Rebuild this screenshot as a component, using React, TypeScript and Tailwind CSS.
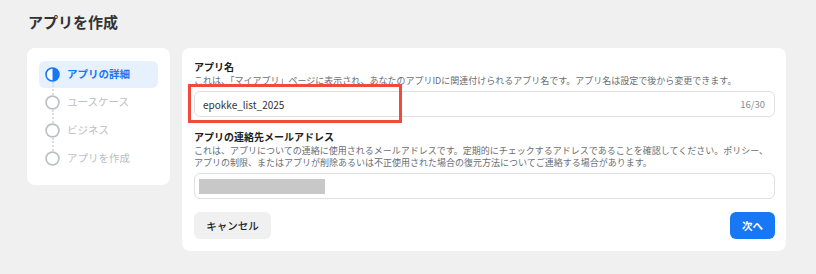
import React from "react";

const font = { fontFamily: '"Noto Sans CJK JP", "Noto Sans", sans-serif' };

function StepIcon({ active }: { active: boolean }) {
  if (active) {
    return (
      <svg width="15" height="15" viewBox="0 0 15 15" className="shrink-0">
        <circle cx="7.5" cy="7.5" r="6.5" fill="white" stroke="#1877f2" strokeWidth="1.6" />
        <path d="M7.5 1 A6.5 6.5 0 0 1 7.5 14 Z" fill="#1877f2" />
      </svg>
    );
  }
  return (
    <svg width="15" height="15" viewBox="0 0 15 15" className="shrink-0">
      <circle cx="7.5" cy="7.5" r="6.4" fill="white" stroke="#bcc0c4" strokeWidth="1.7" />
    </svg>
  );
}

const steps = ["アプリの詳細", "ユースケース", "ビジネス", "アプリを作成"];

export default function App() {
  return (
    <div className="min-h-[274px] w-[816px] bg-[#f0f0f0] pl-[27px] pr-[30px] pt-[12px]" style={font}>
      <h1 className="h-[20px] pl-[1px] text-[15px] font-bold leading-[20px] text-[#333333]">アプリを作成</h1>
      <div className="mt-[16px] flex items-start gap-[12px]">
        {/* Left nav card */}
        <div className="w-[143px] rounded-[8px] bg-white px-[12px] py-[13px]">
          <div className="flex flex-col gap-[1px]">
            {steps.map((s, i) => (
              <div
                key={s}
                className={
                  i === 0
                    ? "relative flex h-[27px] items-center gap-[7px] rounded-[6px] bg-[#e7f0fd] pl-[6px]"
                    : "relative flex h-[27px] items-center gap-[7px] rounded-[6px] pl-[6px]"
                }
              >
                <StepIcon active={i === 0} />
                <span
                  className={
                    i === 0
                      ? "text-[10.5px] font-bold leading-none text-[#1877f2]"
                      : "text-[10.5px] leading-none text-[#bcc0c4]"
                  }
                >
                  {s}
                </span>
                {i < steps.length - 1 && (
                  <div className="absolute left-[13px] top-[21px] h-[13px] border-l-2 border-dotted border-[#dadde1]" />
                )}
              </div>
            ))}
          </div>
        </div>

        {/* Right form card */}
        <div className="flex-1 rounded-[8px] bg-white pb-[12px] pl-[12px] pr-[11px] pt-[12px]">
          <div className="text-[10px] font-semibold leading-[14px] text-[#1c1e21]">アプリ名</div>
          <div className="mt-[1px] whitespace-nowrap text-[9px] leading-[12px] text-[#6b6e73]">
            これは、「マイアプリ」ページに表示され、あなたのアプリIDに関連付けられるアプリ名です。アプリ名は設定で後から変更できます。
          </div>
          <div className="relative mt-[4px] flex h-[26px] items-center justify-between rounded-[6px] border border-[#dddfe2] pl-[8px] pr-[9px]">
            <span className="text-[10px] text-[#333333]">epokke_list_2025</span>
            <span className="text-[9.5px] text-[#8a8d91]">16/30</span>
            <div className="absolute left-[-7px] top-[-8px] h-[39px] w-[214px] border-[3px] border-[#f04a3c]" />
          </div>

          <div className="mt-[13px] text-[10px] font-semibold leading-[14px] text-[#1c1e21]">
            アプリの連絡先メールアドレス
          </div>
          <div className="mt-[1px] whitespace-nowrap text-[9px] leading-[12px] text-[#6b6e73]">
            <div>
              これは、アプリについての連絡に使用されるメールアドレスです。定期的にチェックするアドレスであることを確認してください。ポリシー、
            </div>
            <div>
              アプリの制限、またはアプリが削除あるいは不正使用された場合の復元方法についてご連絡する場合があります。
            </div>
          </div>
          <div className="mt-[4px] flex h-[26px] items-center rounded-[6px] border border-[#dddfe2] pl-[4px]">
            <div className="h-[15px] w-[126px] bg-[#c8c8c8]" />
          </div>

          <div className="mt-[13px] flex items-center justify-between">
            <button className="flex h-[27px] w-[77px] items-center justify-center rounded-[6px] bg-[#f0f0f0] text-[10.5px] font-medium text-[#1c1e21]">
              キャンセル
            </button>
            <button className="flex h-[27px] w-[45px] items-center justify-center rounded-[6px] bg-[#1877f2] text-[10.5px] font-bold text-white">
              次へ
            </button>
          </div>
        </div>
      </div>
    </div>
  );
}
